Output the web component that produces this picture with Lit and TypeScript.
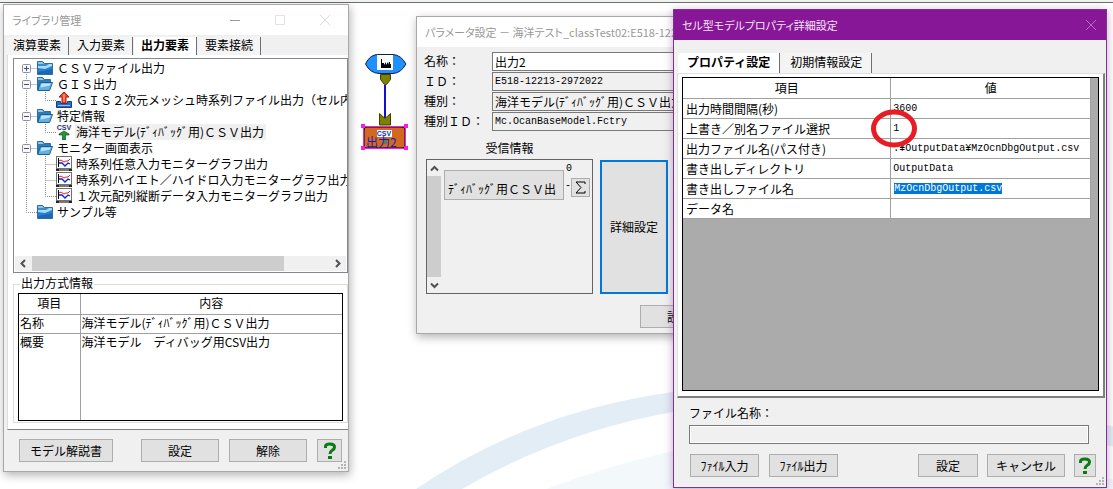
import { LitElement, html, css, svg, nothing } from "lit";
import { customElement, state } from "lit/decorators.js";
import { classMap } from "lit/directives/class-map.js";

type IconName = "closed" | "open" | "upload" | "csv" | "graph";

interface TreeRow {
  label: string;
  icon: IconName;
  child?: boolean;
  toggle?: "+" | "-";
  last?: boolean;
  lastChild?: boolean;
  selected?: boolean;
}

const TREE: TreeRow[] = [
  { label: "ＣＳＶファイル出力", icon: "closed", toggle: "+" },
  { label: "ＧＩＳ出力", icon: "open", toggle: "-" },
  { label: "ＧＩＳ２次元メッシュ時系列ファイル出力（セル内", icon: "upload", child: true, lastChild: true },
  { label: "特定情報", icon: "open", toggle: "-" },
  { label: "海洋モデル(ﾃﾞｨﾊﾞｯｸﾞ用)ＣＳＶ出力", icon: "csv", child: true, lastChild: true, selected: true },
  { label: "モニター画面表示", icon: "open", toggle: "-" },
  { label: "時系列任意入力モニターグラフ出力", icon: "graph", child: true },
  { label: "時系列ハイエト／ハイドロ入力モニターグラフ出力", icon: "graph", child: true },
  { label: "１次元配列縦断データ入力モニターグラフ出力", icon: "graph", child: true, lastChild: true },
  { label: "サンプル等", icon: "closed", last: true },
];

const PROPS: { name: string; value: string; selected?: boolean }[] = [
  { name: "出力時間間隔(秒)", value: "3600" },
  { name: "上書き／別名ファイル選択", value: "1" },
  { name: "出力ファイル名(パス付き)", value: ".¥OutputData¥MzOcnDbgOutput.csv" },
  { name: "書き出しディレクトリ", value: "OutputData" },
  { name: "書き出しファイル名", value: "MzOcnDbgOutput.csv", selected: true },
  { name: "データ名", value: "" },
];

const FIELDS = [
  { id: "name", label: "名称：", value: "出力2", readonly: false, mono: false },
  { id: "id", label: "ＩＤ：", value: "E518-12213-2972022", readonly: true, mono: true },
  { id: "kind", label: "種別：", value: "海洋モデル(ﾃﾞｨﾊﾞｯｸﾞ用)ＣＳＶ出力", readonly: true, mono: false },
  { id: "kind-id", label: "種別ＩＤ：", value: "Mc.OcanBaseModel.Fctry", readonly: true, mono: true },
];

const ICONS: Record<IconName, unknown> = {
  closed: svg`
    <path d="M.5 1.500h5l2 2h8v11H.5z" fill="#3c8ccc" stroke="#2a6ea4"/>
    <path d="M1 2h4l2 2h-6z" fill="#8cc8ec"/>
    <path d="M1 6h8l3-2h3v3L9 9l-8 1z" fill="#a4dcf6"/>
    <path d="M1 14V8l7 1 7-3v8z" fill="#2c80d0"/>
    <path d="M1 14v-2l14-3v5z" fill="#1c68b8"/>`,
  open: svg`
    <path d="M.5 14V1.500h5l2 2h6v3" fill="#2f7cb8" stroke="#2a6ea4"/>
    <path d="M1 2h4l2 2h-6z" fill="#8cc8ec"/>
    <path d="M3.500 6.500h12l-3 8H.7z" fill="#62b0e0" stroke="#1f5f98"/>
    <path d="M4.500 7.500h9.500l-1 2-9.500 2z" fill="#b8e6fa"/>`,
  upload: svg`
    <path d="M.5 9.500h4v2h7v-2h4v6H.5z" fill="#2c6cc8" stroke="#153f86"/>
    <path d="M2 13h12v1H2z" fill="#8cc0f4"/>
    <path d="M8 0l5 5h-3v6H6V5H3z" fill="#f04a2c" stroke="#b01c10"/>
    <path d="M8 2v8" stroke="#ffb090"/>`,
  csv: svg`
    <rect width="16" height="8" fill="#fffbd8"/>
    <text x="8" y="6" text-anchor="middle" class="csv">CSV</text>
    <path d="M8 7l5 3v1H9.500v5h-3v-5H3v-1z" fill="#12a03c" stroke="#103818" stroke-width=".6"/>`,
  graph: svg`
    <rect x=".5" y=".5" width="15" height="12" fill="#fff" stroke="#707070"/>
    <path d="M2.500 2v9" stroke="#000"/>
    <path d="M3 5l2-1 3 2 2-1h2l2-2" stroke="#e02020" fill="none"/>
    <path d="M3 7h3l3 3 3-3 2 1" stroke="#1020e0" fill="none" stroke-width="1.300"/>
    <path d="M2 13h12v2H2z" fill="#777"/><path d="M0 13h3v2H0zM13 13h3v2h-3z" fill="#222"/>`,
};

@customElement("app-root")
export class AppRoot extends LitElement {
  static styles = css`
    :host {
      display: block;
      font-family: "Noto Sans CJK JP", "Liberation Sans", sans-serif;
      font-size: 12px;
      line-height: 16px;
      color: #000;
    }
    * { box-sizing: border-box; }
    button, input { font: inherit; color: inherit; margin: 0; border-radius: 0; }
    svg { display: block; }

    .desktop {
      position: relative;
      height: 100vh;
      overflow: hidden;
      background: #fff;
      border-top: 2px solid #f0f2f0;
    }
    .rule { height: 1px; background: #6c706c; }
    .swoosh { position: absolute; left: 0; top: -2px; }
    .diagram { position: absolute; left: 360px; top: 48px; }
    .mark { position: absolute; left: 870px; top: 107px; }
    .csv { font: bold 7px "Liberation Sans", sans-serif; fill: #1030c0; }
    .node-label { font-size: 12px; fill: #1818c8; }

    .window {
      position: absolute;
      display: flex;
      flex-direction: column;
      background: #f0f0f0;
      border: 1px solid #a8a8a8;
      box-shadow: 1px 3px 9px rgba(0, 0, 0, 0.3);
    }
    .library { left: 3px; top: 2px; bottom: 17px; width: 346px; }
    .params { left: 416px; top: 14px; width: 320px; }
    .detail {
      left: 673px; top: 7px; right: 6px; bottom: 1px;
      border-color: #7c3488;
      box-shadow: 0 2px 9px rgba(110, 40, 130, 0.4);
    }

    .title {
      display: flex;
      align-items: center;
      height: 30px;
      flex: none;
      padding: 0 8px;
      background: #fff;
      color: #999;
      font-size: 11px;
      font-feature-settings: "palt";
      white-space: nowrap;
      overflow: hidden;
    }
    .title h1 { margin: 0; font: inherit; flex: 1; }
    .detail .title { background: #881798; color: #f4e4f6; }
    .caption { display: flex; }
    .caption button {
      width: 45px; height: 28px; padding: 0;
      display: grid; place-items: center;
      border: 0; background: none;
    }
    .library .caption { margin-right: -7px; }
    .detail .caption { margin-right: -15px; }

    .tabs { display: flex; align-items: flex-end; gap: 1px; flex: none; }
    .library .tabs { padding: 1px 2px 0; height: 20px; }
    .detail .tabs { padding: 12px 4px 0; height: 33px; }
    .tab {
      height: 18px;
      padding: 0 7px 2px;
      border: 0;
      border-right: 1px solid #707070;
      background: #f4f4f4;
      line-height: 16px;
    }
    .detail .tab { height: 20px; padding: 0 9px 2px; }
    .tab.on { background: #fff; font-weight: bold; }
    .panel {
      flex: 1;
      display: flex;
      flex-direction: column;
      min-height: 0;
      background: #fff;
      border-bottom: 1px solid #808080;
    }
    .library .panel { margin-left: 3px; border-left: 1px solid #ddd; padding: 3px 0 6px 5px; }
    .detail .panel {
      margin: 0 1px 0 3px; padding: 3px 4px 5px;
      border: 1px solid #e0e0e0;
      border-right: 2px solid #808080;
      border-bottom: 2px solid #808080;
    }

    .tree {
      flex: 1;
      display: flex;
      flex-direction: column;
      justify-content: space-between;
      min-height: 0;
      border: 1px solid #828790;
      overflow: hidden;
    }
    .tree ul { list-style: none; margin: 0; padding: 1px 0 0 4px; }
    .row { display: flex; height: 16px; white-space: nowrap; }
    .row span { margin-left: 3px; padding: 0 2px 0 1px; }
    .row .chosen { background: #f0f0f0; }
    .row svg { flex: none; }
    .hbar { display: flex; align-items: center; background: #f0f0f0; height: 15px; margin: 0 1px 1px; }
    .hbar .track { flex: 1; height: 15px; }
    .hbar .thumb { width: 85%; height: 15px; background: #cdcdcd; }
    .arrow {
      width: 17px; height: 15px; padding: 0; border: 0; background: none;
      display: grid; place-items: center;
    }

    fieldset {
      margin: 2px 0 0; padding: 0 4px 1px;
      border: 1px solid #dcdcdc;
      min-width: 0;
    }
    legend { margin-left: 2px; padding: 0 1px; height: 18px; }
    table { border-collapse: collapse; width: 100%; table-layout: fixed; background: #fff; }
    th, td {
      padding: 0 2px;
      font-weight: normal;
      text-align: left;
      vertical-align: top;
      border: 1px solid #a0a0a0;
      white-space: nowrap;
      overflow: hidden;
    }
    th { text-align: center; }
    .info { border: 1px solid #000; height: 128px; }
    .info table { height: 126px; }
    .info table, .grid table { border-style: hidden; }
    .info th { height: 20px; padding-top: 1px; }
    .info td { padding: 0 1px; }
    .info .short td { height: 19px; }
    .info .narrow { width: 61px; }

    .grid {
      flex: 1;
      padding-right: 7px;
      border: 1px solid #000;
      background: #ababab;
    }
    .grid th, .grid td { height: 20px; padding: 2px 3px 1px; }
    .grid table { border-bottom: 1px solid #a0a0a0; border-right: 1px solid #a0a0a0; }
    .grid .narrow { width: 51%; }
    .mono { font-family: "Liberation Mono", monospace; font-size: 10px; }
    .grid .mono { padding: 2px 2px 1px; line-height: 16px; }
    .picked { background: #0078d7; color: #fff; margin-left: 1px; }

    .btn {
      height: 23px;
      padding: 0;
      border: 1px solid #adadad;
      background: #e1e1e1;
    }
    .help { width: 24px; display: grid; place-items: center; }
    .grip { position: absolute; right: 1px; bottom: 1px; }
    .foot { display: flex; align-items: center; flex: none; }
    .library .foot { height: 41px; padding: 0 6px 0 15px; }
    .library .foot .btn { width: 78px; margin-right: 10px; }
    .library .foot .wide { width: 94px; margin-right: 28px; }
    .library .foot .help { width: 25px; margin: 0; }

    .fields {
      display: grid;
      grid-template-columns: 68px 1fr;
      row-gap: 1px;
      padding: 5px 0 0 7px;
    }
    .fields label { line-height: 18px; }
    .fields input { width: 100%; height: 19px; padding: 0 2px; border: 1px solid #7a7a7a; background: #fff; }
    .fields input[readonly] { background: #f0f0f0; }
    .receive { display: flex; gap: 7px; padding: 0 0 0 9px; margin-top: 9px; align-items: flex-end; }
    .receive h2 { margin: 0; font: inherit; text-align: center; height: 19px; }
    .slots {
      display: flex;
      width: 167px; height: 135px;
      border: 1px solid #646464;
    }
    .vbar { display: flex; flex-direction: column; width: 14px; }
    .vbar .thumb { flex: 1; background: #cdcdcd; }
    .vbar .arrow { width: 14px; height: 16px; }
    .slot { display: flex; align-items: flex-start; padding: 0 3px; }
    .source {
      width: 120px; height: 30px; margin-top: 10px; padding: 8px 3px 0;
      border: 1px solid #adadad; background: #e1e1e1;
      text-align: left; white-space: nowrap; overflow: hidden;
    }
    .port { display: grid; grid-template-columns: 5px 19px; column-gap: 1px; padding-left: 1px; }
    .port .count { grid-column: 1 / 3; height: 18px; padding-left: 1px; padding-top: 1px; }
    .sigma { width: 19px; height: 19px; padding: 0; border: 1px solid #adadad; background: #e1e1e1; display: grid; place-items: center; }
    .more { width: 68px; height: 134px; padding: 0; border: 2px solid #0078d7; background: #e1e1e1; }
    .params .foot { justify-content: flex-end; padding: 11px 17px 5px; }
    .params .foot .btn { width: 78px; }

    .file { padding: 7px 17px 10px 15px; display: flex; flex-direction: column; gap: 4px; }
    .file input { height: 19px; width: 100%; border: 1px solid #7a7a7a; background: #f0f0f0; box-shadow: inset 0 0 0 1px #fff; }
    .detail .foot { padding: 0 10px 10px 16px; gap: 9px; }
    .detail .foot .file-btn { width: 69px; margin-right: 1px; }
    .detail .foot .ok { width: 60px; margin-left: auto; }
    .detail .foot .cancel { width: 78px; }
    .detail .foot .help { width: 22px; }
  `;

  @state() private libraryTab = 2;
  @state() private detailTab = 0;

  private guides(r: TreeRow) {
    const dot = (d: string) => svg`<path d=${d} stroke="#909090" stroke-dasharray="1 1" fill="none"/>`;
    const first = r === TREE[0];
    const root = r.last ? dot("M8.5 0V8.500H19") : r.child ? dot("M8.5 0V16") : dot(`M8.5 ${first ? 8 : 0}V16M8.5 8.500H19`);
    return html`
      <svg width=${r.child ? 38 : 19} height="16" aria-hidden="true">
        ${root}
        ${r.child ? dot(r.lastChild ? "M27.5 0V8.500H38" : "M27.5 0V16M27.5 8.500H38") : nothing}
        ${r.toggle
          ? svg`<rect x="4.500" y="4.500" width="8" height="8" rx="1" fill="#f8f8f8" stroke="#919191"/>
              <path d=${r.toggle === "+" ? "M6 8.500h5M8.500 6v5" : "M6 8.500h5"} stroke="#3050a0"/>`
          : nothing}
      </svg>`;
  }

  private icon(name: IconName) {
    return html`<svg width="16" height="16" aria-hidden="true">${ICONS[name]}</svg>`;
  }

  private arrow(d: string, label: string) {
    return html`<button class="arrow" aria-label=${label}>
      <svg width="9" height="9"><path d=${d} fill="none" stroke="#505050" stroke-width="2"/></svg>
    </button>`;
  }

  private tabs(labels: string[], active: number, pick: (i: number) => void) {
    return html`<div class="tabs" role="tablist">
      ${labels.map((t, i) => html`<button role="tab" aria-selected=${i === active}
        class=${classMap({ tab: true, on: i === active })} @click=${() => pick(i)}>${t}</button>`)}
    </div>`;
  }

  private help() {
    return html`<button class="btn help" aria-label="ヘルプ">
      <svg width="14" height="18"><path d="M2.500 6V4.500Q2.500 2 7 2t4.500 3q0 2-2.200 3.300T7 12" fill="none" stroke="#0a7a12" stroke-width="3"/>
        <rect x="5" y="14" width="4" height="3" fill="#0a7a12"/></svg>
    </button>`;
  }

  private grip() {
    return html`<svg class="grip" width="9" height="9" aria-hidden="true">
      <path d="M6 0h2v2H6zM3 3h2v2H3zM6 3h2v2H6zM0 6h2v2H0zM3 6h2v2H3zM6 6h2v2H6z" fill="#b4b4b4"/></svg>`;
  }

  private library() {
    return html`<section class="window library">
      <header class="title"><h1>ライブラリ管理</h1>
        <div class="caption">
          <button aria-label="最小化"><svg width="10" height="10"><path d="M0 5.500h10" stroke="#999"/></svg></button>
          <button aria-label="最大化"><svg width="10" height="10"><path d="M.5.500h9v9h-9z" fill="none" stroke="#e2e2e2"/></svg></button>
          <button aria-label="閉じる"><svg width="10" height="10"><path d="M0 0l10 10M10 0L0 10" stroke="#dadada"/></svg></button>
        </div>
      </header>
      ${this.tabs(["演算要素", "入力要素", "出力要素", "要素接続"], this.libraryTab, (i) => (this.libraryTab = i))}
      <div class="panel">
        <div class="tree">
          <ul>${TREE.map((r) => html`<li class="row">${this.guides(r)}${this.icon(r.icon)}<span
            class=${classMap({ chosen: !!r.selected })}>${r.label}</span></li>`)}</ul>
          <div class="hbar">
            ${this.arrow("M6 1L2.500 4.500L6 8", "左へ")}
            <div class="track"><div class="thumb"></div></div>
            ${this.arrow("M3 1L6.500 4.500L3 8", "右へ")}
          </div>
        </div>
        <fieldset>
          <legend>出力方式情報</legend>
          <div class="info"><table>
            <tr><th class="narrow">項目</th><th>内容</th></tr>
            <tr class="short"><td>名称</td><td>海洋モデル(ﾃﾞｨﾊﾞｯｸﾞ用)ＣＳＶ出力</td></tr>
            <tr><td>概要</td><td>海洋モデル　ディバッグ用CSV出力</td></tr>
          </table></div>
        </fieldset>
      </div>
      <footer class="foot">
        <button class="btn wide">モデル解説書</button>
        <button class="btn">設定</button>
        <button class="btn">解除</button>
        ${this.help()}
      </footer>
      ${this.grip()}
    </section>`;
  }

  private params() {
    return html`<section class="window params">
      <header class="title"><h1>パラメータ設定 － 海洋テスト_classTest02:E518-122</h1></header>
      <div class="fields">
        ${FIELDS.map((f) => html`<label for=${f.id}>${f.label}</label>
          <input id=${f.id} class=${classMap({ mono: f.mono })} .value=${f.value} ?readonly=${f.readonly}>`)}
      </div>
      <div class="receive">
        <div>
          <h2>受信情報</h2>
          <div class="slots">
            <div class="vbar">
              ${this.arrow("M1 6.500L4.500 3L8 6.500", "上へ")}
              <div class="thumb"></div>
              ${this.arrow("M1 2.500L4.500 6L8 2.500", "下へ")}
            </div>
            <div class="slot">
              <button class="source">ﾃﾞｨﾊﾞｯｸﾞ用ＣＳＶ出</button>
              <div class="port">
                <span class="mono count">0</span>
                <span class="mono">-</span>
                <button class="sigma" aria-label="合計"><svg width="11" height="13">
                  <path d="M10 3V1H1l5 5.500L1 12h9v-2" fill="none" stroke="#000"/></svg></button>
              </div>
            </div>
          </div>
        </div>
        <button class="more">詳細設定</button>
      </div>
      <footer class="foot"><button class="btn">設定</button></footer>
    </section>`;
  }

  private detail() {
    return html`<section class="window detail">
      <header class="title"><h1>セル型モデルプロパティ詳細設定</h1>
        <div class="caption">
          <button aria-label="閉じる"><svg width="10" height="10"><path d="M0 0l10 10M10 0L0 10" stroke="#b56cc0"/></svg></button>
        </div>
      </header>
      ${this.tabs(["プロパティ設定", "初期情報設定"], this.detailTab, (i) => (this.detailTab = i))}
      <div class="panel"><div class="grid"><table>
        <tr><th class="narrow">項目</th><th>値</th></tr>
        ${PROPS.map((p) => html`<tr><td>${p.name}</td>
          <td class="mono"><span class=${classMap({ picked: !!p.selected })}>${p.value}</span></td></tr>`)}
      </table></div></div>
      <div class="file">
        <label for="file">ファイル名称：</label>
        <input id="file" readonly>
      </div>
      <footer class="foot">
        <button class="btn file-btn">ﾌｧｲﾙ入力</button>
        <button class="btn file-btn">ﾌｧｲﾙ出力</button>
        <button class="btn ok">設定</button>
        <button class="btn cancel">キャンセル</button>
        ${this.help()}
      </footer>
      ${this.grip()}
    </section>`;
  }

  private diagram() {
    return html`<svg class="diagram" width="50" height="104" aria-hidden="true">
      <path d="M5.500 14Q10 4 19 4.500H33Q41 5 46 14Q41 23 33 23.500H19Q10 23 5.500 14z" fill="#1e90ff" stroke="#102040"/>
      <rect x="17" y="5" width="16" height="15" fill="#fff"/>
      <path d="M21 18V9h1v4h2v2l2-3v3l2-3v3l1-3h1v2h1v4z" fill="#000"/>
      <path d="M20.500 24.500h10v5l-4 5h-2l-4-5z" fill="#808000" stroke="#404000"/>
      <path d="M25 35v33" stroke="#1010d8" stroke-width="2"/>
      <path d="M19.500 75V63.500l5.500 5 5.500-5V75z" fill="#808000" stroke="#404000"/>
      <rect x="4" y="77" width="41" height="21" rx="3" fill="#d2691e" stroke="#000"/>
      <rect x="3.500" y="76.500" width="42" height="22" fill="none" stroke="#f020e0"/>
      <path d="M1 74h4v4H1zM44 74h4v4h-4zM1 96h4v4H1zM44 96h4v4h-4z" fill="#f020e0"/>
      <rect x="17" y="80" width="15" height="7" fill="#fff"/>
      <text x="24" y="86" text-anchor="middle" class="csv">CSV</text>
      <path d="M23 88h4v6h-4z" fill="#5a8050"/>
      <text x="6" y="97" class="node-label">出力2</text>
    </svg>`;
  }

  render() {
    return html`<main class="desktop">
      <div class="rule"></div>
      <svg class="swoosh" width="1120" height="489" aria-hidden="true">
        <path d="M416 489Q528 412 673 392Q860 370 1120 428V448Q860 392 673 412Q560 432 462 489z" fill="#e3edf5"/>
        <path d="M546 489Q610 465 673 451L1120 480V489z" fill="#f3f8fb"/>
      </svg>
      ${this.diagram()}
      ${this.library()}
      ${this.params()}
      ${this.detail()}
      <svg class="mark" width="48" height="40" aria-hidden="true">
        <ellipse cx="24" cy="19.500" rx="20.500" ry="16.500" fill="none" stroke="#e81c24" stroke-width="5"/>
      </svg>
    </main>`;
  }
}
